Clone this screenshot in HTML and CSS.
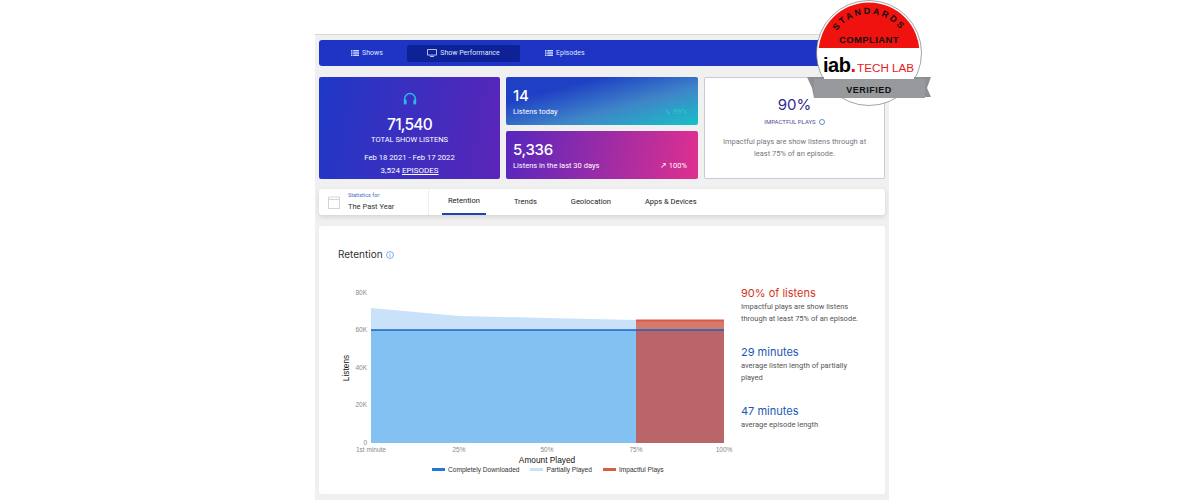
FILE: index.html
```html
<!DOCTYPE html>
<html lang="en">
<head>
  <meta charset="UTF-8"/>
  <title>Show Performance</title>
  <link rel="stylesheet" href="styles.css">
</head>
<body>
  <div class="shell">
    <nav class="topnav">
      <a class="nav-item nav-shows"><svg class="nav-icon" viewBox="0 0 8 6"><path d="M0 0h1.500v1.400H0zM2.200 0H8v1.400H2.200zM0 2.300h1.500v1.400H0zM2.200 2.300H8v1.400H2.200zM0 4.600h1.500V6H0zM2.200 4.600H8V6H2.200z"/></svg>Shows</a>
      <a class="nav-item nav-active"><svg class="nav-icon-tv" viewBox="0 0 10 8"><path d="M.5.5h9v5.600h-9zM3 7.500h4" fill="none" stroke="#dfe6ff" stroke-width=".8"/></svg>Show Performance</a>
      <a class="nav-item nav-episodes"><svg class="nav-icon" viewBox="0 0 8 6"><path d="M0 0h1.500v1.400H0zM2.200 0H8v1.400H2.200zM0 2.300h1.500v1.400H0zM2.200 2.300H8v1.400H2.200zM0 4.600h1.500V6H0zM2.200 4.600H8V6H2.200z"/></svg>Episodes</a>
    </nav>

    <section class="cards">
      <div class="card-total">
        <svg class="headphones" viewBox="0 0 14 14"><path d="M1.600 9V7a5.400 5.400 0 0 1 10.800 0v2" fill="none" stroke="#2bb8e8" stroke-width="1.500"/><rect x=".8" y="7.600" width="2.800" height="5" rx="1" fill="#2bb8e8"/><rect x="10.400" y="7.600" width="2.800" height="5" rx="1" fill="#2bb8e8"/></svg>
        <div class="total-num">71,540</div>
        <div class="total-label">TOTAL SHOW LISTENS</div>
        <div class="total-dates">Feb 18 2021 - Feb 17 2022</div>
        <div class="total-eps">3,524 <u>EPISODES</u></div>
      </div>
      <div class="card-mid">
        <div class="stat stat-today">
          <div class="stat-num">14</div>
          <div class="stat-row"><span>Listens today</span><span class="stat-change-teal">↘ 99%</span></div>
        </div>
        <div class="stat stat-month">
          <div class="stat-num">5,336</div>
          <div class="stat-row"><span>Listens in the last 30 days</span><span>↗ 100%</span></div>
        </div>
      </div>
      <div class="card-impact">
        <div class="impact-num">90%</div>
        <div class="impact-label">IMPACTFUL PLAYS <span class="impact-dot"></span></div>
        <p class="impact-text">Impactful plays are show listens through at least 75% of an episode.</p>
      </div>
    </section>

    <section class="tabs">
      <div class="period">
        <svg class="cal" viewBox="0 0 12 13"><path d="M.5 1h11v11.500H.5zM.5 3.500h11" fill="none" stroke="#d4d4d4"/></svg>
        <div>
          <div class="period-small">Statistics for:</div>
          <div class="period-big">The Past Year</div>
        </div>
      </div>
      <a class="tab tab-active">Retention</a>
      <a class="tab">Trends</a>
      <a class="tab">Geolocation</a>
      <a class="tab">Apps &amp; Devices</a>
    </section>

    <section class="retention">
      <h2 class="ret-title">Retention <svg class="info" viewBox="0 0 10 10"><circle cx="5" cy="5" r="4.300" fill="none" stroke="#3f7fd6" stroke-width=".8"/><path d="M5 4.300v3M5 2.500v1" stroke="#3f7fd6" stroke-width=".8"/></svg></h2>
      <div class="ret-body">
        <svg class="chart" viewBox="0 0 400 200" width="400" height="200">
          <g class="tick">
            <text x="14" y="18" text-anchor="end">80K</text>
            <text x="14" y="55" text-anchor="end">60K</text>
            <text x="14" y="93" text-anchor="end">40K</text>
            <text x="14" y="130" text-anchor="end">20K</text>
            <text x="14" y="168" text-anchor="end">0</text>
            <text x="18" y="175" text-anchor="middle">1st minute</text>
            <text x="106" y="175" text-anchor="middle">25%</text>
            <text x="194" y="175" text-anchor="middle">50%</text>
            <text x="283" y="175" text-anchor="middle">75%</text>
            <text x="371" y="175" text-anchor="middle">100%</text>
          </g>
          <path d="M18 31 L106 39 L194 41 L283 43 V166 H18Z" fill="#c9e2f9"/>
          <rect x="18" y="53" width="265" height="113" fill="#83c1f2"/>
          <rect x="283" y="43" width="88" height="10" fill="#d57a6c"/>
          <rect x="283" y="42.500" width="88" height="2" fill="#dc5a47"/>
          <rect x="283" y="53" width="88" height="113" fill="#ba6668"/>
          <line x1="18" y1="53" x2="371" y2="53" stroke="#1763c9" stroke-width="1.400"/>
          <text class="axis" transform="translate(-4 91) rotate(-90)" text-anchor="middle">Listens</text>
          <text class="axis" x="194" y="186" text-anchor="middle">Amount Played</text>
        </svg>
        <div class="legend">
          <span class="leg"><i class="swatch sw-blue"></i>Completely Downloaded</span>
          <span class="leg"><i class="swatch sw-light"></i>Partially Played</span>
          <span class="leg"><i class="swatch sw-red"></i>Impactful Plays</span>
        </div>
        <div class="facts">
          <div class="fact">
            <div class="fact-head fact-red">90% of listens</div>
            <p>Impactful plays are show listens through at least 75% of an episode.</p>
          </div>
          <div class="fact">
            <div class="fact-head">29 minutes</div>
            <p>average listen length of partially played</p>
          </div>
          <div class="fact">
            <div class="fact-head">47 minutes</div>
            <p>average episode length</p>
          </div>
        </div>
      </div>
    </section>
  </div>

  <!-- badge sits over the page corner -->
  <svg class="badge" viewBox="0 0 126 108" width="126" height="108">
    <defs>
      <path id="arc" d="M23 53 A39 39 0 0 1 101 53"/>
      <clipPath id="top"><rect x="0" y="0" width="126" height="48"/></clipPath>
    </defs>
    <circle cx="62" cy="53" r="52.500" fill="#fff" stroke="#666" stroke-width=".6"/>
    <circle cx="62" cy="53" r="50.500" fill="#f0120f" clip-path="url(#top)"/>
    <text class="b-arc"><textPath href="#arc" startOffset="50%" text-anchor="middle">STANDARDS</textPath></text>
    <text class="b-comp" x="62" y="43" text-anchor="middle">COMPLIANT</text>
    <text class="b-iab" x="16" y="72">iab<tspan fill="#f0120f">.</tspan></text>
    <text class="b-tech" x="50" y="72">TECH LAB</text>
    <path d="M0 77h17v21H7l-2-10zM124 77h-17v20h17l-4-9z" fill="#8d8f92"/>
    <rect x="7" y="79" width="111" height="19" fill="#97999c"/>
    <text class="b-ver" x="62" y="93" text-anchor="middle">VERIFIED</text>
  </svg>
</body>
</html>
```

FILE: styles.css
```css
html, body { margin: 0; padding: 0; height: 500px; overflow: hidden; }
body { background: #fff; font-family: Roboto, "Liberation Sans", sans-serif; position: relative; padding-top: 34px; box-sizing: border-box; }

.shell {
  width: 566px; height: 460px; margin-left: 315px; padding: 5px 4px 0;
  background: #f0f0f0; border-top: 1px solid #d8d8d8;
}

/* top nav */
.topnav {
  display: flex; align-items: center; height: 26px; background: #1e34c4;
  border-radius: 3px; color: #dfe6ff; font-size: 7px;
}
.nav-item { display: flex; align-items: center; gap: 3px; height: 17px; }
.nav-shows { margin-left: 32px; width: 56px; }
.nav-active {
  width: 113px; justify-content: center; background: #0e2196;
  border-radius: 2px; margin-right: 25px;
}
.nav-icon { width: 8px; height: 6px; fill: #c9d4ff; }
.nav-icon-tv { width: 10px; height: 8px; }

/* stat cards */
.cards { display: flex; gap: 6px; margin-top: 11px; height: 102px; }
.card-total {
  width: 181px; display: flex; flex-direction: column; align-items: center;
  color: #fff; border-radius: 2px;
  background: linear-gradient(100deg, #1f38c6, #5a25b8);
}
.headphones { width: 14px; height: 14px; margin-top: 15px; }
.total-num { font-family: Inter, sans-serif; font-size: 15.500px; font-weight: 500; line-height: 20px; margin-top: 9px; letter-spacing: -.8px; }
.total-label { font-size: 7.500px; line-height: 10px; }
.total-dates { font-size: 7.700px; line-height: 10px; margin-top: 8px; }
.total-eps { font-size: 8px; line-height: 10px; margin-top: 3px; }

.card-mid { width: 192px; display: flex; flex-direction: column; gap: 6px; }
.stat {
  flex: 1; color: #fff; border-radius: 2px; padding: 0 11px 0 7px;
  display: flex; flex-direction: column; justify-content: center;
}
.stat-today { background: linear-gradient(165deg, #1f3fc4 25%, #3f86c8 62%, #17c0c8); }
.stat-month { background: linear-gradient(100deg, #5527bd, #e0308f); }
.stat-num { font-family: Inter, sans-serif; font-size: 15px; font-weight: 500; line-height: 20px; letter-spacing: -.3px; }
.stat-row { display: flex; justify-content: space-between; font-size: 7.500px; line-height: 10px; margin-top: 1px; }
.stat-change-teal { color: #1fd0c0; }

.card-impact {
  width: 179px; background: #fff; border: 1px solid #c9c9dc; border-radius: 2px;
  display: flex; flex-direction: column; align-items: center; text-align: center;
}
.impact-num { font-family: Inter, sans-serif; font-size: 15px; color: #2e2a8e; line-height: 18px; margin-top: 18px; }
.impact-label { font-size: 6px; color: #4a4a9c; margin-top: 4px; display: flex; align-items: center; gap: 3px; }
.impact-dot { width: 4px; height: 4px; border: 1px solid #5b8ed6; border-radius: 50%; }
.impact-text { font-size: 7.500px; line-height: 12px; color: #77777f; margin: 11px 12px 0; }

/* tabs row */
.tabs {
  display: flex; align-items: stretch; height: 26px; margin-top: 10px; background: #fff;
  border-radius: 3px; box-shadow: 0 2px 5px rgba(0,0,0,.12); font-size: 7.500px; color: #222;
}
.period {
  width: 100px; border-right: 1px solid #eee; margin-right: 13px; padding-left: 9px;
  display: flex; align-items: center; gap: 8px;
}
.cal { width: 12px; height: 13px; }
.period-small { font-size: 5.500px; color: #3a6fc4; line-height: 7px; }
.period-big { font-size: 7.500px; line-height: 10px; margin-top: 3px; color: #333; }
.tab { display: flex; align-items: center; padding: 0 6px 2px; margin-right: 22px; }
.tab-active { border-bottom: 1px solid #1a46b0; box-shadow: inset 0 -1px 0 #1a46b0; }

/* retention panel */
.retention {
  height: 268px; margin-top: 11px; background: #fff; border-radius: 3px;
  padding: 0 0 0 19px; box-sizing: border-box;
}
.ret-title {
  display: flex; align-items: center; gap: 3px; margin: 0; padding-top: 22px;
  font-family: Inter, sans-serif; font-size: 10px; font-weight: 400; color: #333; line-height: 13px;
}
.info { width: 8px; height: 8px; }
.ret-body { position: relative; margin-top: 16px; height: 215px; }
.chart { position: absolute; left: 15px; top: 0; overflow: visible; }
.tick text { font-size: 6.500px; fill: #888; font-family: "Liberation Sans", sans-serif; }
.axis { font-size: 8.300px; fill: #111; font-family: "Liberation Sans", sans-serif; }

.legend {
  position: absolute; left: 94px; top: 189px; display: flex; gap: 11px;
  font-family: "Liberation Sans", sans-serif; font-size: 6.600px; color: #333;
}
.leg { display: flex; align-items: center; gap: 2px; }
.swatch { display: block; width: 13px; height: 3px; margin-right: 1px; }
.sw-blue { background: #1f78d8; }
.sw-light { background: #c9e2f9; }
.sw-red { background: #dc5a47; }

.facts { position: absolute; left: 403px; top: 9px; width: 124px; display: flex; flex-direction: column; gap: 21px; }
.fact-head { font-family: Inter, sans-serif; font-size: 11px; line-height: 15px; color: #1a56b8; }
.fact-red { color: #d43320; }
.fact p { margin: 0; font-size: 7.500px; line-height: 11.500px; color: #555; }

/* iab badge */
.badge { position: absolute; left: 807px; top: 0; }
.badge text { font-family: "Liberation Sans", sans-serif; }
.b-arc { font-size: 9px; font-weight: 700; letter-spacing: 2.200px; fill: #111; }
.b-comp { font-size: 9.500px; font-weight: 700; letter-spacing: .4px; fill: #111; }
.b-iab { font-size: 20px; font-weight: 700; fill: #000; letter-spacing: -.5px; }
.b-tech { font-size: 11.700px; fill: #e8201c; }
.b-ver { font-size: 9px; font-weight: 700; letter-spacing: .5px; fill: #111; }
```
